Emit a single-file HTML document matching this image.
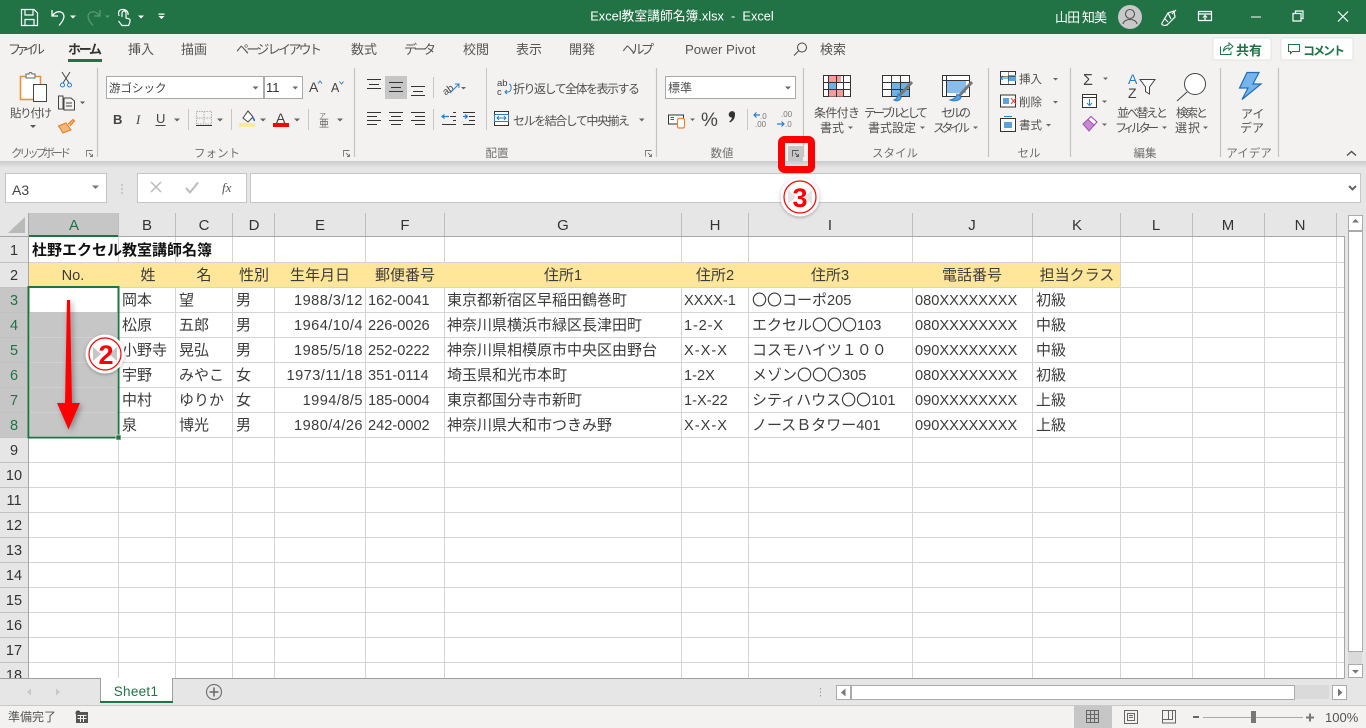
<!DOCTYPE html>
<html lang="ja"><head><meta charset="utf-8"><title>Excel教室講師名簿.xlsx - Excel</title>
<style>
html,body{margin:0;padding:0;width:1366px;height:728px;overflow:hidden;background:#e6e6e6}
svg{display:block}
text{font-family:"Liberation Sans","Noto Sans CJK JP",sans-serif;fill:#262626}
.t{font-size:13px;fill:#555}
.r{font-size:11.5px;fill:#505050}
.g{font-size:11.5px;fill:#707070;text-anchor:middle}
.c{font-size:15px;fill:#3c3c3c}
.l{font-size:14.6px}
.e{font-size:14.6px;text-anchor:end;letter-spacing:.45px}
.m{text-anchor:middle}
.h{font-size:15px;fill:#333;text-anchor:middle}
.rn{font-size:14.5px;fill:#333;text-anchor:middle}
.sn{font-size:14.5px;fill:#217346;text-anchor:middle}
.ic{fill:none;stroke:#444;stroke-width:1}
.w{fill:none;stroke:#fff;stroke-width:1.2}
</style></head><body>
<svg width="1366" height="728" viewBox="0 0 1366 728" xmlns="http://www.w3.org/2000/svg">
<defs>
<filter id="sh" x="-60%" y="-20%" width="220%" height="140%"><feDropShadow dx="2" dy="2" stdDeviation="3" flood-color="#000" flood-opacity=".35"/></filter>
<filter id="csh" x="-30%" y="-30%" width="160%" height="160%"><feDropShadow dx="0" dy="1" stdDeviation="1.6" flood-color="#000" flood-opacity=".3"/></filter>
<linearGradient id="rs" x1="0" y1="0" x2="0" y2="1"><stop offset="0" stop-color="#c9c9c9"/><stop offset="1" stop-color="#e6e6e6"/></linearGradient>
</defs>
<!-- backgrounds -->
<rect width="1366" height="728" fill="#e6e6e6"/>
<rect width="1366" height="34" fill="#217346"/>
<rect y="34" width="1366" height="127" fill="#f3f2f1"/>
<rect y="161" width="1366" height="7" fill="url(#rs)"/>
<!-- QAT -->
<g class="w">
<path d="M21.500 9.500H34L37.500 13V25.500H21.500Z"/><path d="M25 10V15H33V10M25 25V19.500H34V25"/>
<path d="M52 10V16H58M52.500 15.500C56 11 60 11 62.500 13C65.500 16 64 20 59 25.500" stroke-width="1.300"/>
</g>
<path d="M70 15.500h6l-3 3z" fill="#fff"/>
<g fill="none" stroke="#5c9a78" stroke-width="1.200"><path d="M100 10V16H94M99.500 15.500C96 11 92 11 89.500 13C86.500 16 88 20 93 25.500"/></g>
<path d="M105 15.500h5l-2.500 2.500z" fill="#5c9a78"/>
<g class="w"><path d="M122 17V13a2 2 0 0 1 4 0V18L129.500 19C130.500 20 130 22.500 128.500 25.500H122L118.500 21M119 16C117.500 11 120 9 123.500 9.500C127 10 128.500 12.500 128 15"/></g>
<path d="M138 15.500h6l-3 3z" fill="#fff"/>
<path d="M158.500 13.500h6v1.200h-6zM158.500 16h6l-3 3z" fill="#fff"/>
<text x="682" y="20.500" class="m" style="font-size:12.800px;fill:#fff" xml:space="preserve">Excel教室講師名簿.xlsx  -  Excel</text>
<!-- title right -->
<text x="1055" y="22" style="font-size:13px;fill:#fff" textLength="52">山田 知美</text>
<circle cx="1130" cy="17" r="12" fill="#c8c8c8"/>
<circle cx="1130" cy="14" r="4.500" fill="none" stroke="#555" stroke-width="1.100"/><path d="M1123 24c1-6 13-6 14 0" fill="none" stroke="#555" stroke-width="1.100"/>
<g class="w"><path d="M1162 23L1168 13L1174 11L1175 17L1167 25C1164 26 1161 25 1162 23ZM1172 14L1176 10M1168 13L1171 19M1165 19L1168 22"/>
<path d="M1198.500 11.500H1211.500V20.500H1198.500ZM1198.500 14H1211.500M1205 20V15.500M1203 17.500L1205 15.500L1207 17.500"/>
<path d="M1251 17H1261" stroke-width="1"/><path d="M1293 13.500H1301V21H1293ZM1295.500 13V11H1303V18.500H1301"/><path d="M1338 11.500L1348 21.500M1348 11.500L1338 21.500"/></g>
<!-- tabs -->
<text x="8" y="54" class="t" textLength="37">ファイル</text>
<text x="68" y="54" style="font-size:13px;font-weight:700;fill:#333" textLength="34">ホーム</text><rect x="68" y="59" width="34" height="3" fill="#217346"/>
<text x="128" y="54" class="t">挿入</text><text x="181" y="54" class="t">描画</text>
<text x="236" y="54" class="t" textLength="86">ページ レイアウト</text>
<text x="351" y="54" class="t">数式</text><text x="404" y="54" class="t" textLength="32">データ</text><text x="463" y="54" class="t">校閲</text><text x="516" y="54" class="t">表示</text><text x="569" y="54" class="t">開発</text><text x="622" y="54" class="t" textLength="32">ヘルプ</text>
<text x="685" y="54" class="t" style="font-size:13.200px">Power Pivot</text>
<circle cx="802" cy="47.500" r="4.500" class="ic"/><path d="M798.500 51L794 55.500" class="ic"/>
<text x="820" y="54" class="t">検索</text>
<!-- share/comment -->
<rect x="1213" y="38" width="58" height="22" rx="1" fill="#fff" stroke="#e3e2e1"/>
<path d="M1220.500 46.500V54.500H1231V51.500M1223.500 51C1223.500 47.500 1226 45.500 1229 45.500V43L1233 46.500L1229 50V48C1227 48 1225 49 1223.500 51Z" fill="none" stroke="#217346"/>
<text x="1236" y="55" style="font-size:13px;font-weight:700;fill:#217346">共有</text>
<rect x="1281" y="38" width="72" height="22" rx="1" fill="#fff" stroke="#e3e2e1"/>
<path d="M1288.500 44.500H1299.500V51.500H1292.500L1290.500 53.500V51.500H1288.500Z" fill="none" stroke="#217346"/>
<text x="1303" y="55" style="font-size:12px;font-weight:700;fill:#217346" textLength="42">コメント</text>
<!-- separators -->
<g stroke="#c4c4c4" stroke-width="1.200"><path d="M97.500 68V157M354.500 68V157M656.500 68V157M803.500 68V157M988.500 68V157M1070.500 68V157M1220.500 68V157M1278.500 68V157"/></g>
<!-- group labels -->
<text x="41" y="157" class="g" textLength="60">クリップボード</text>
<text x="217" y="157" class="g">フォント</text><text x="497" y="157" class="g">配置</text><text x="722" y="157" class="g">数値</text><text x="895" y="157" class="g">スタイル</text><text x="1029" y="157" class="g">セル</text><text x="1145" y="157" class="g">編集</text><text x="1249" y="157" class="g">アイデア</text>
<g fill="none" stroke="#777" stroke-width=".9"><path d="M86.500 156.500V150.500H92.500M89 153L92.500 156.500M92.500 154V156.500H90"/><path d="M343.500 156.500V150.500H349.500M346 153L349.500 156.500M349.500 154V156.500H347"/><path d="M645.500 156.500V150.500H651.500M648 153L651.500 156.500M651.500 154V156.500H649"/></g>
<!-- clipboard -->
<rect x="20.500" y="76.500" width="20" height="23" fill="#fff" stroke="#e8933a" stroke-width="1.600"/>
<path d="M26 78V74H29a1.500 1.500 0 0 1 3 0H35V78Z" fill="#fff" stroke="#666"/>
<rect x="33.500" y="84.500" width="13" height="17" fill="#fff" stroke="#444"/>
<text x="31" y="117" class="r m" textLength="42">貼り付け</text>
<path d="M30 125h6l-3 3z" fill="#555"/>
<g fill="none" stroke="#444"><path d="M62 72L69 83M70 72L63 83"/></g><circle cx="62.500" cy="85" r="2" fill="none" stroke="#2a7fc6"/><circle cx="69.500" cy="85" r="2" fill="none" stroke="#2a7fc6"/>
<path d="M58.500 96H63V109H58.500ZM64 98H71L74.500 101V110H64ZM66 103H72M66 106H72" fill="#f3f2f1" stroke="#444"/>
<path d="M80 101.500h5l-2.500 2.500z" fill="#555"/>
<path d="M58.500 126L66 123L71 130C68 131 65 132 63 133ZM68 124L73 119.500L74.500 121L70 126" fill="#f5b777" stroke="#e07b1e"/>
<!-- font -->
<rect x="106.500" y="76.500" width="157" height="22" fill="#fff" stroke="#aaa"/><rect x="264.500" y="76.500" width="38" height="22" fill="#fff" stroke="#aaa"/>
<text x="109" y="92" style="font-size:11.500px;fill:#444">游ゴシック</text><path d="M252.500 86.500h6l-3 3zM292.500 86.500h5.500l-2.700 3z" fill="#666"/>
<text x="266" y="92" style="font-size:13px;fill:#333">11</text>
<text x="309" y="92" style="font-size:14px;fill:#444">A</text><path d="M318 83.500l2-2.500 2 2.500" fill="none" stroke="#2a7fc6"/>
<text x="331" y="92" style="font-size:12.500px;fill:#444">A</text><path d="M339.500 81.500l2 2.500 2-2.500" fill="none" stroke="#2a7fc6"/>
<text x="113" y="124" style="font:700 13px 'Liberation Sans';fill:#444">B</text>
<text x="136" y="124" style="font:italic 13px 'Liberation Serif';fill:#444">I</text>
<text x="156" y="123" style="font:13px 'Liberation Sans';fill:#444">U</text><path d="M155.500 125.500H165.500" stroke="#444"/>
<path d="M174 118.500h6l-3 3zM217 118.500h6l-3 3zM260 118.500h6l-3 3zM294 118.500h6l-3 3zM337 118.500h6l-3 3z" fill="#666"/>
<g stroke="#c6c6c6"><path d="M188.500 109V130M231.500 109V130M308.500 109V130"/></g>
<path d="M196.500 111.500H211.500V124H196.500ZM204 111.500V124M196.500 118H211.500" fill="none" stroke="#b0b0b0" stroke-dasharray="1.500 1"/><path d="M196 125.500H212" stroke="#333"/>
<path d="M243 118L248 111L253 117L248 122Z" fill="#fff" stroke="#444"/><path d="M252 117c1 1 3 2 2 4" stroke="#1e6fb8" fill="none" stroke-width="1.500"/><rect x="239" y="123" width="16" height="4" fill="#fde9a0"/>
<text x="276" y="123" style="font-size:14px;fill:#444">A</text><rect x="273" y="123" width="16" height="4" fill="#f00"/>
<text x="319" y="118" style="font-size:7px;fill:#777">ア</text><text x="319" y="127" style="font-size:10px;fill:#666">亜</text>
<!-- alignment -->
<rect x="385" y="76" width="22" height="23" fill="#c6c6c6"/>
<g fill="none" stroke="#333"><path d="M367 79.500H381M369 84.500H379M367 88.500H381M389 82.500H403M391 87.500H401M389 91.500H403M411 86.500H425M413 91.500H423M411 95.500H425"/>
<path d="M367 112.500H381M367 116.500H377M367 120.500H381M367 124.500H377M389 112.500H403M391 116.500H401M389 120.500H403M391 124.500H401M411 112.500H425M415 116.500H425M411 120.500H425M415 124.500H425"/>
<path d="M453 112.500H456M450 116.500H456M453 120.500H456M442 124.500H456M475 112.500H463M469 116.500H475M469 120.500H475M463 124.500H475"/></g>
<path d="M449 116.500H442M444.500 114.500L442 116.500L444.500 118.500M463 116.500H467M465 114.500L467.500 116.500L465 118.500" fill="none" stroke="#2a7fc6" stroke-width="1.200"/>
<g stroke="#c6c6c6"><path d="M433.500 77V98M433.500 109V130M486.500 68V130"/></g>
<text x="441" y="92" transform="rotate(-35 449 87)" style="font-size:10px;fill:#444">ab</text><path d="M450 93L459 84M455 84H459V88" fill="none" stroke="#2a7fc6"/><path d="M461 87h5l-2.500 2.500z" fill="#666"/>
<text x="497" y="86" style="font-size:9.500px;fill:#444">ab</text><text x="497" y="95" style="font-size:9.500px;fill:#444">c</text><path d="M509 84c3 0 3 8-1 8h-3M507 90l-2 2 2 2" fill="none" stroke="#2a7fc6"/>
<text x="513" y="93" style="font-size:12px;fill:#505050" textLength="127">折り返して全体を表示する</text>
<rect x="494.500" y="111.500" width="14" height="14" fill="#fff" stroke="#333"/><rect x="494.500" y="114.500" width="14" height="7" fill="#fff" stroke="#2a7fc6"/><path d="M497 118H506M499 116L497 118L499 120M504 116L506 118L504 120" fill="none" stroke="#2a7fc6"/>
<text x="513" y="125" style="font-size:12px;fill:#505050" textLength="117">セルを結合して中央揃え</text>
<path d="M639 118.500h5.500l-2.700 3z" fill="#666"/>
<!-- number -->
<rect x="665.500" y="76.500" width="130" height="22" fill="#fff" stroke="#aaa"/><text x="668" y="92" style="font-size:12px;fill:#505050">標準</text><path d="M785 86.500h6l-3 3z" fill="#666"/>
<rect x="668.500" y="115" width="15" height="9" fill="#fff" stroke="#333"/><path d="M670.500 117.500H674M670.500 119.500H674" stroke="#217346"/><rect x="677.500" y="118.500" width="7" height="9.500" rx="1.500" fill="#fff" stroke="#e8833a" stroke-width="1.200"/><path d="M690 118.500h5l-2.500 2.500z" fill="#666"/>
<text x="701" y="126" style="font-size:19px;fill:#444">%</text>
<path d="M729.500 112.500a3 3 0 0 1 5.500 2c0 4-2 6.500-5 8l-.8-1c1.500-1 2.500-2.300 2.800-4a3 3 0 0 1-2.500-5z" fill="#333"/>
<path d="M747.500 109V130" stroke="#c6c6c6"/>
<path d="M754 115H760M756.500 112.500L754 115L756.500 117.500" fill="none" stroke="#2a7fc6" stroke-width="1.200"/>
<text x="760" y="119" style="font-size:8px;fill:#777">.0</text><text x="755" y="127" style="font-size:8px;fill:#777">.00</text>
<text x="781" y="117" style="font-size:8px;fill:#777">.00</text><text x="785" y="127" style="font-size:8px;fill:#777">.0</text>
<path d="M777 124H784M781.500 121.500L784 124L781.500 126.500" fill="none" stroke="#2a7fc6" stroke-width="1.200"/>
<!-- styles -->
<g fill="none" stroke="#333"><rect x="823.500" y="75.500" width="27" height="21" fill="#fff"/></g>
<rect x="828" y="76" width="13" height="6.500" fill="#fb9a9a"/><rect x="828" y="83" width="8" height="6.500" fill="#6fb1e6"/><rect x="828" y="90" width="15" height="6.500" fill="#fb9a9a"/>
<path d="M823.500 82.500H850.500M823.500 89.500H850.500M828.500 75.500V96.500M836.500 75.500V96.500M843.500 75.500V96.500" stroke="#333" fill="none"/>
<rect x="882.500" y="75.500" width="27" height="21" fill="#fff" stroke="#333"/><rect x="891" y="82" width="18" height="14" fill="#6fb1e6"/>
<path d="M882.500 82.500H909.500M882.500 89.500H909.500M891.500 75.500V96.500M900.500 75.500V96.500" stroke="#333" fill="none"/>
<path d="M912 82L899 96" stroke="#777" stroke-width="3" fill="none"/><path d="M894 100C897 99 898 96 898 94L901 97C901 100 897 102 894 100Z" fill="#5aa3dd" stroke="#2a7fc6"/>
<rect x="942.500" y="75.500" width="27" height="21" fill="#fff" stroke="#333"/><rect x="946" y="80" width="20" height="13" fill="#88bdeb"/>
<path d="M942.500 80.500H969.500M946.500 75.500V96.500" stroke="#333" fill="none"/>
<path d="M972 82L959 96" stroke="#777" stroke-width="3" fill="none"/><path d="M950 100C955 99 957 96 957 94L961 97C961 100 955 102 950 100Z" fill="#5aa3dd" stroke="#2a7fc6"/>
<g style="font-size:12px"><text x="814" y="117" class="r" style="font-size:12px" textLength="46">条件付き</text><text x="820" y="132" class="r" style="font-size:12px">書式</text>
<text x="864" y="117" class="r" style="font-size:12px" textLength="64">テーブルとして</text><text x="868" y="132" class="r" style="font-size:12px" textLength="48">書式設定</text>
<text x="941" y="117" class="r" style="font-size:12px" textLength="30">セルの</text><text x="933" y="132" class="r" style="font-size:12px" textLength="37">スタイル</text></g>
<path d="M848 126.500h5l-2.500 2.500zM920 126.500h5l-2.500 2.500zM973 126.500h5l-2.500 2.500z" fill="#666"/>
<!-- cells -->
<rect x="1000.500" y="71.500" width="15" height="13" fill="#fff" stroke="#333"/><rect x="1008" y="75" width="8" height="6" fill="#5aa3dd"/><path d="M1000 78H1008M1003 76L1000.500 78L1003 80" stroke="#2a7fc6" fill="none"/><path d="M1000.500 76.500H1015.500M1008.500 71.500V84.500" stroke="#333" fill="none" opacity=".6"/>
<text x="1019" y="83" class="r">挿入</text>
<rect x="1000.500" y="95" width="15" height="12" fill="#fff" stroke="#333"/><rect x="1003" y="98" width="6" height="6" fill="#5aa3dd"/><path d="M1011 98L1016 104M1016 98L1011 104" stroke="#e44" fill="none"/>
<text x="1019" y="106" class="r">削除</text>
<rect x="1000.500" y="118.500" width="15" height="13" fill="#fff" stroke="#333"/><rect x="1004" y="122" width="8" height="6" fill="#5aa3dd"/><path d="M1004 116.500H1012" stroke="#2a7fc6"/>
<text x="1019" y="129" class="r">書式</text>
<path d="M1053 78h5l-2.500 2.500zM1053 101h5l-2.500 2.500zM1046 124h5l-2.500 2.500z" fill="#666"/>
<!-- editing -->
<text x="1083" y="85" style="font-size:16px;fill:#444">Σ</text><path d="M1103 77.500h5l-2.500 2.500z" fill="#666"/>
<rect x="1082.500" y="94.500" width="14" height="13" fill="#fff" stroke="#333"/><path d="M1082.500 97.500H1096.500" stroke="#333"/><path d="M1089.500 99V105M1087 103L1089.500 105.500L1092 103" stroke="#2a7fc6" fill="none"/><path d="M1102 100.500h5l-2.500 2.500z" fill="#666"/>
<path d="M1083 124L1091 116.500L1097 122L1089 131Z" fill="#c58ad1" stroke="#a24fb4"/><path d="M1088 119.500L1094 125L1097 122L1091 116.500Z" fill="#fff" stroke="#a24fb4"/><path d="M1102 123.500h5l-2.500 2.500z" fill="#666"/>
<text x="1128" y="84" style="font-size:14px;fill:#2a7fc6">A</text><text x="1128" y="98" style="font-size:14px;fill:#444">Z</text>
<path d="M1140 79.500H1155L1149.500 87V94L1145.500 91.500V87Z" fill="#fff" stroke="#444"/>
<text x="1117" y="117" class="r" style="font-size:12px" textLength="51">並べ替えと</text><text x="1115" y="132" class="r" style="font-size:12px" textLength="44">フィルター</text><path d="M1162 126.500h5l-2.500 2.500z" fill="#666"/>
<circle cx="1195" cy="84" r="10.500" fill="#fff" stroke="#444"/><path d="M1187 92L1177 101" stroke="#444" fill="none"/>
<text x="1176" y="117" class="r" style="font-size:12px" textLength="32">検索と</text><text x="1175" y="132" class="r" style="font-size:12px" textLength="25">選択</text><path d="M1203 126.500h5l-2.500 2.500z" fill="#666"/>
<path d="M1247 72.500H1259L1253 84H1261L1242 99.500L1248 88H1239.500Z" fill="#78b4ec" stroke="#1e6fb8" stroke-width="1.200"/>
<text x="1241" y="118" class="r" style="font-size:12px">アイ</text><text x="1240" y="132" class="r" style="font-size:12px">デア</text>
<path d="M1347 155.500L1351.500 151.500L1356 155.500" fill="none" stroke="#555" stroke-width="1.500"/>
<!-- formula bar -->
<rect x="5.500" y="173.500" width="101" height="29" fill="#fff" stroke="#c6c6c6"/>
<text x="12" y="195" style="font-size:14px;fill:#444">A3</text><path d="M92 185.500h7l-3.500 3.500z" fill="#777"/>
<path d="M122 184v2M122 188v2M122 192v2" stroke="#aaa"/>
<rect x="137.500" y="173.500" width="109" height="29" fill="#fff" stroke="#c6c6c6"/>
<path d="M151 182L161 192M161 182L151 192" stroke="#bbb" stroke-width="1.500" fill="none"/>
<path d="M186 188L190 192.500L198 182.500" stroke="#bbb" stroke-width="2" fill="none"/>
<text x="222" y="192" style="font:italic 13px 'Liberation Serif';fill:#555">fx</text>
<rect x="250.500" y="173.500" width="1110" height="29" fill="#fff" stroke="#c6c6c6"/>
<path d="M1349 186L1352.500 189.500L1356 186" stroke="#666" stroke-width="2" fill="none"/>
<!-- sheet -->
<rect x="29" y="237" width="1315" height="441" fill="#fff"/>
<rect x="29" y="262" width="1091" height="25" fill="#ffe699"/>
<!-- headers -->
<rect x="0" y="213" width="1344" height="24" fill="#e6e6e6"/>
<rect x="29" y="213" width="89" height="24" fill="#c6c6c6"/>
<rect x="0" y="287" width="28" height="150" fill="#c6c6c6"/>
<path d="M25 217V233H8Z" fill="#b9b9b9"/>
<!-- grid -->
<g stroke="#d4d4d4" fill="none"><path d="M29 262.500H1344M29 287.500H1344M29 312.500H1344M29 337.500H1344M29 362.500H1344M29 387.500H1344M29 412.500H1344M29 437.500H1344M29 462.500H1344M29 487.500H1344M29 512.500H1344M29 537.500H1344M29 562.500H1344M29 587.500H1344M29 612.500H1344M29 637.500H1344M29 662.500H1344"/>
<path d="M118.500 237V678M175.500 237V678M232.500 237V678M274.500 237V678M365.500 237V678M444.500 237V678M681.500 237V678M748.500 237V678M912.500 237V678M1032.500 237V678M1120.500 237V678M1192.500 237V678M1264.500 237V678M1336.500 237V678"/></g>
<rect x="29" y="263" width="1091" height="24" fill="#ffe699"/>
<g stroke="#c2c2c2" fill="none"><path d="M0 262.500H28M0 287.500H28M0 312.500H28M0 337.500H28M0 362.500H28M0 387.500H28M0 412.500H28M0 437.500H28M0 462.500H28M0 487.500H28M0 512.500H28M0 537.500H28M0 562.500H28M0 587.500H28M0 612.500H28M0 637.500H28M0 662.500H28"/></g>
<g stroke="#bdbdbd" fill="none"><path d="M118.500 213V236M175.500 213V236M232.500 213V236M274.500 213V236M365.500 213V236M444.500 213V236M681.500 213V236M748.500 213V236M912.500 213V236M1032.500 213V236M1120.500 213V236M1192.500 213V236M1264.500 213V236M1336.500 213V236"/></g>
<path d="M0 236.500H1344.500V678" stroke="#a6a6a6" fill="none" stroke-width="1"/>
<path d="M28.500 213V678" stroke="#a6a6a6"/>
<rect x="29" y="235" width="89" height="2" fill="#217346"/>
<!-- column letters -->
<text x="74" y="230" class="h" style="fill:#217346">A</text><text x="147" y="230" class="h">B</text><text x="204" y="230" class="h">C</text><text x="254" y="230" class="h">D</text><text x="320" y="230" class="h">E</text><text x="405" y="230" class="h">F</text><text x="563" y="230" class="h">G</text><text x="715" y="230" class="h">H</text><text x="830" y="230" class="h">I</text><text x="972" y="230" class="h">J</text><text x="1077" y="230" class="h">K</text><text x="1156" y="230" class="h">L</text><text x="1228" y="230" class="h">M</text><text x="1300" y="230" class="h">N</text>
<!-- row numbers -->
<text x="14" y="255" class="rn">1</text><text x="14" y="280" class="rn">2</text><text x="14" y="305" class="sn">3</text><text x="14" y="330" class="sn">4</text><text x="14" y="355" class="sn">5</text><text x="14" y="380" class="sn">6</text><text x="14" y="405" class="sn">7</text><text x="14" y="430" class="sn">8</text><text x="14" y="455" class="rn">9</text><text x="14" y="480" class="rn">10</text><text x="14" y="505" class="rn">11</text><text x="14" y="530" class="rn">12</text><text x="14" y="555" class="rn">13</text><text x="14" y="580" class="rn">14</text><text x="14" y="605" class="rn">15</text><text x="14" y="630" class="rn">16</text><text x="14" y="655" class="rn">17</text><text x="14" y="680" class="rn">18</text>
<!-- cell data -->
<text x="32" y="255" style="font-size:15px;font-weight:700;fill:#111">杜野エクセル教室講師名簿</text>
<g class="c">
<text class="c m" x="73" y="280" style="font-size:14.600px">No.</text><text class="c m" x="148" y="280">姓</text><text class="c m" x="204" y="280">名</text><text class="c m" x="254" y="280">性別</text><text class="c m" x="320" y="280">生年月日</text><text class="c m" x="405" y="280">郵便番号</text>
<text class="c m" x="563" y="280">住所<tspan class="l">1</tspan></text><text class="c m" x="715" y="280">住所<tspan class="l">2</tspan></text><text class="c m" x="830" y="280">住所<tspan class="l">3</tspan></text><text class="c m" x="972" y="280">電話番号</text><text class="c m" x="1077" y="280">担当クラス</text>

<text class="c" x="122" y="305">岡本</text><text class="c" x="179" y="305">望</text><text class="c" x="236" y="305">男</text><text class="c e" x="363" y="305">1988/3/12</text><text class="c l" x="368" y="305">162-0041</text><text class="c" x="447" y="305">東京都新宿区早稲田鶴巻町</text><text class="c l" x="684" y="305">XXXX-1</text><text class="c" x="752" y="305">〇〇コーポ<tspan class="l">205</tspan></text><text class="c l" x="915" y="305">080XXXXXXXX</text><text class="c" x="1036" y="305">初級</text>

<text class="c" x="122" y="330">松原</text><text class="c" x="179" y="330">五郎</text><text class="c" x="236" y="330">男</text><text class="c e" x="363" y="330">1964/10/4</text><text class="c l" x="368" y="330">226-0026</text><text class="c" x="447" y="330">神奈川県横浜市緑区長津田町</text><text class="c l" x="684" y="330" textLength="39">1-2-X</text><text class="c" x="752" y="330">エクセル〇〇〇<tspan class="l">103</tspan></text><text class="c l" x="915" y="330">080XXXXXXXX</text><text class="c" x="1036" y="330">中級</text>

<text class="c" x="122" y="355">小野寺</text><text class="c" x="179" y="355">晃弘</text><text class="c" x="236" y="355">男</text><text class="c e" x="363" y="355">1985/5/18</text><text class="c l" x="368" y="355">252-0222</text><text class="c" x="447" y="355">神奈川県相模原市中央区由野台</text><text class="c l" x="684" y="355" textLength="43">X-X-X</text><text class="c" x="752" y="355">コスモハイツ１００</text><text class="c l" x="915" y="355">090XXXXXXXX</text><text class="c" x="1036" y="355">中級</text>

<text class="c" x="122" y="380">宇野</text><text class="c" x="179" y="380">みやこ</text><text class="c" x="236" y="380">女</text><text class="c e" x="363" y="380">1973/11/18</text><text class="c l" x="368" y="380">351-0114</text><text class="c" x="447" y="380">埼玉県和光市本町</text><text class="c l" x="684" y="380">1-2X</text><text class="c" x="752" y="380">メゾン〇〇〇<tspan class="l">305</tspan></text><text class="c l" x="915" y="380">080XXXXXXXX</text><text class="c" x="1036" y="380">初級</text>

<text class="c" x="122" y="405">中村</text><text class="c" x="179" y="405">ゆりか</text><text class="c" x="236" y="405">女</text><text class="c e" x="363" y="405">1994/8/5</text><text class="c l" x="368" y="405">185-0004</text><text class="c" x="447" y="405">東京都国分寺市新町</text><text class="c l" x="684" y="405">1-X-22</text><text class="c" x="752" y="405">シティハウス〇〇<tspan class="l">101</tspan></text><text class="c l" x="915" y="405">090XXXXXXXX</text><text class="c" x="1036" y="405">上級</text>

<text class="c" x="122" y="430">泉</text><text class="c" x="179" y="430">博光</text><text class="c" x="236" y="430">男</text><text class="c e" x="363" y="430">1980/4/26</text><text class="c l" x="368" y="430">242-0002</text><text class="c" x="447" y="430">神奈川県大和市つきみ野</text><text class="c l" x="684" y="430" textLength="43">X-X-X</text><text class="c" x="752" y="430">ノースＢタワー<tspan class="l">401</tspan></text><text class="c l" x="915" y="430">090XXXXXXXX</text><text class="c" x="1036" y="430">上級</text>
</g>
<!-- selection -->
<rect x="30" y="312" width="87" height="124" fill="#c6c6c6"/>
<path d="M30 337.500H117M30 362.500H117M30 387.500H117M30 412.500H117" stroke="#d0d0d0"/>
<rect x="28.500" y="287" width="90" height="150.500" fill="none" stroke="#217346" stroke-width="2"/>
<rect x="116" y="435" width="5" height="5" fill="#217346" stroke="#fff" stroke-width=".6"/>
<path d="M67 300H70L72 403H80L68.500 429.500L57 403H65Z" fill="#f00" filter="url(#sh)"/>
<!-- callout 2 -->
<circle cx="105" cy="354" r="19.500" fill="#fff" filter="url(#csh)"/><circle cx="105" cy="354" r="16" fill="none" stroke="#f00" stroke-width="1.200"/>
<path d="M93 347L101 354L93 361ZM117 347L109 354L117 361Z" fill="#c6c6c6"/>
<text x="106" y="364" class="m" style="font:700 27px 'Liberation Sans';fill:#f00;text-anchor:middle">2</text>
<!-- red box -->
<rect x="781.500" y="139.500" width="30" height="30" rx="3" fill="none" stroke="#f00" stroke-width="7"/>
<rect x="788" y="146" width="15" height="15" fill="#c6c6c6"/>
<path d="M792.500 156.500V150.500H798.500M795 153L798.500 156.500M798.500 154V156.500H796" fill="none" stroke="#555" stroke-width=".9"/>
<!-- callout 3 -->
<circle cx="800" cy="197" r="19.500" fill="#fff" filter="url(#csh)"/><circle cx="800" cy="197" r="16" fill="none" stroke="#f00" stroke-width="1.200"/>
<path d="M788 190L796 197L788 204ZM812 190L804 197L812 204Z" fill="#e4e4e4"/>
<text x="800" y="207" style="font:700 27px 'Liberation Sans';fill:#f00;text-anchor:middle">3</text>
<!-- v scrollbar -->
<rect x="1345" y="213" width="21" height="465" fill="#e6e6e6"/>
<rect x="1348" y="232" width="14" height="432" fill="#dadada"/>
<rect x="1348.500" y="215.500" width="14" height="15" fill="#fff" stroke="#ababab"/><path d="M1352 222.500h7l-3.500-3.500z" fill="#777"/>
<rect x="1348.500" y="231.500" width="14" height="420" fill="#fff" stroke="#ababab"/>
<rect x="1348.500" y="664.500" width="14" height="13" fill="#fff" stroke="#ababab"/><path d="M1352 670h7l-3.500 3.500z" fill="#777"/>
<!-- sheet tabs -->
<rect x="0" y="678" width="1366" height="28" fill="#e6e6e6"/>
<path d="M0 678.500H100.500V702M172.500 702V678.500H1344.500" stroke="#9f9f9f" fill="none"/>
<rect x="101" y="678" width="71" height="24" fill="#fff"/>
<rect x="100" y="701" width="73" height="2" fill="#217346"/>
<text x="136" y="696" class="m" style="font-size:13.500px;fill:#217346;letter-spacing:.3px">Sheet1</text>
<path d="M31 688.500L27 692L31 695.500ZM56 688.500L60 692L56 695.500Z" fill="#c9c9c9"/>
<circle cx="214" cy="692" r="7.500" fill="none" stroke="#777" stroke-width="1.200"/><path d="M209.500 692H218.500M214 687.500V696.500" stroke="#666" stroke-width="1.500"/>
<path d="M820.500 688v1.500M820.500 691.500v1.500M820.500 695v1.500" stroke="#999"/>
<!-- h scrollbar -->
<rect x="851" y="685" width="478" height="14" fill="#dadada"/>
<rect x="836.500" y="685.500" width="14" height="14" fill="#fff" stroke="#ababab"/><path d="M845.500 688.500L841 692.500L845.500 696.500Z" fill="#777"/>
<rect x="851.500" y="685.500" width="443" height="14" fill="#fff" stroke="#ababab"/>
<rect x="1332.500" y="685.500" width="14" height="14" fill="#fff" stroke="#ababab"/><path d="M1338 688.500L1342.500 692.500L1338 696.500Z" fill="#777"/>
<!-- status -->
<rect y="705" width="1366" height="23" fill="#f3f2f1"/><path d="M0 705.500H1366" stroke="#c9c9c9"/>
<text x="8" y="721" style="font-size:12px;fill:#555">準備完了</text>
<circle cx="78" cy="713" r="2.500" fill="#444"/><rect x="76" y="712" width="12" height="11" fill="#555"/><path d="M77.500 715.500H86.500M77.500 718.500H86.500M80.500 715V722M83.500 715V722" stroke="#f3f2f1"/>
<rect x="1074" y="706" width="38" height="22" fill="#c6c6c6"/>
<path d="M1086.500 710.500H1098.500V722.500H1086.500ZM1086.500 714.500H1098.500M1086.500 718.500H1098.500M1090.500 710.500V722.500M1094.500 710.500V722.500" fill="none" stroke="#666"/>
<path d="M1124.500 710.500H1137.500V723.500H1124.500ZM1127.500 713.500H1134.500V720.500H1127.500ZM1129 715.500H1133M1129 717.500H1133" fill="none" stroke="#666"/>
<path d="M1162.500 710.500H1175.500V723H1162.500ZM1162.500 719.500H1172.500V710.500M1168.500 710.500V719" fill="none" stroke="#666"/>
<rect x="1193" y="716" width="6" height="2" fill="#666"/><path d="M1203 717.500H1303" stroke="#aaa"/><rect x="1251" y="711" width="5" height="12" fill="#777"/><path d="M1306 717.500H1314M1310 713.500V721.500" stroke="#777" stroke-width="2"/>
<text x="1325" y="722" style="font-size:13px;fill:#555">100%</text>
</svg>
</body></html>
